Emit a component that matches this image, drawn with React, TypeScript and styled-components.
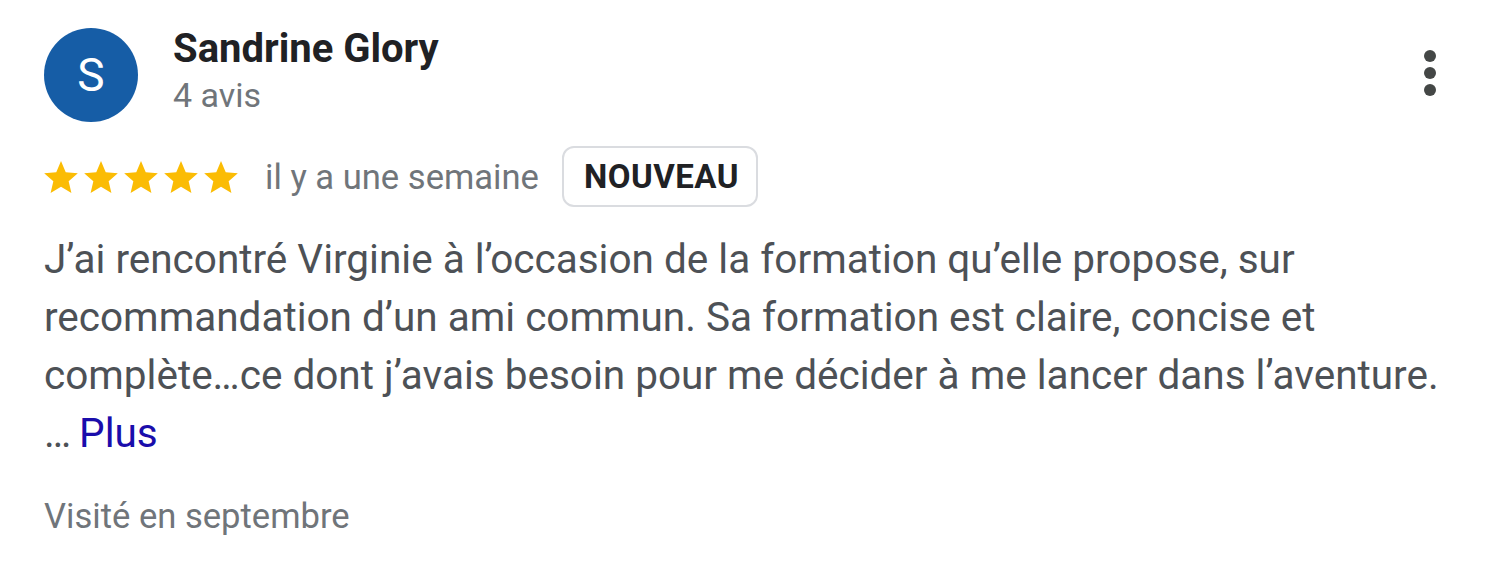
import styled, { createGlobalStyle } from 'styled-components';

const GlobalStyle = createGlobalStyle`
  html, body {
    margin: 0;
    padding: 0;
    background: #fff;
  }
  body {
    font-family: Roboto, 'Liberation Sans', Arial, sans-serif;
  }
`;

const Card = styled.div`
  width: 1500px;
  box-sizing: border-box;
  padding: 25px 30px 0 44px;
  display: flex;
  flex-direction: column;
`;

const Header = styled.div`
  display: flex;
  align-items: flex-start;
  justify-content: space-between;
`;

const Author = styled.div`
  display: flex;
  align-items: flex-start;
  gap: 35px;
`;

const Avatar = styled.div`
  width: 94px;
  height: 94px;
  margin-top: 3px;
  border-radius: 50%;
  background: #165da6;
  color: #fff;
  display: flex;
  align-items: center;
  justify-content: center;
  font-size: 46px;
  font-weight: 400;
`;

const AuthorText = styled.div`
  display: flex;
  flex-direction: column;
`;

const Name = styled.div`
  font-size: 40px;
  line-height: 48px;
  font-weight: 700;
  color: #202124;
`;

const Count = styled.div`
  font-size: 34px;
  line-height: 44px;
  color: #70757a;
`;

const MoreButton = styled.button`
  border: 0;
  background: none;
  padding: 0;
  margin: 24px 33px 0 0;
  display: flex;
`;

const MetaRow = styled.div`
  display: flex;
  align-items: center;
  margin-top: 24px;
  height: 61px;
`;

const Stars = styled.div`
  display: flex;
  gap: 6px;
  margin-right: 27px;
`;

const When = styled.span`
  font-size: 34.6px;
  color: #70757a;
`;

const Badge = styled.span`
  margin-left: 23px;
  height: 61px;
  box-sizing: border-box;
  padding: 0 17px 0 20px;
  border: 2px solid #dadce0;
  border-radius: 12px;
  display: flex;
  align-items: center;
  font-size: 33px;
  letter-spacing: 0.5px;
  font-weight: 700;
  color: #202124;
`;

const Body = styled.p`
  margin: 23px 0 0;
  font-size: 40.5px;
  line-height: 58px;
  color: #4d5156;
`;

const PlusLink = styled.a`
  color: #1a0dab;
  text-decoration: none;
  margin-left: 8px;
`;

const Visited = styled.div`
  margin-top: 32px;
  font-size: 34.6px;
  line-height: 44px;
  color: #70757a;
`;

function Star() {
  return (
    <svg width="34" height="32" viewBox="2 2 20 19">
      <path
        fill="#fbbc04"
        d="M12 17.27L18.18 21l-1.64-7.03L22 9.24l-7.19-.61L12 2 9.19 8.63 2 9.24l5.46 4.73L5.82 21z"
      />
    </svg>
  );
}

function App() {
  return (
    <>
      <GlobalStyle />
      <Card>
        <Header>
          <Author>
            <Avatar>S</Avatar>
            <AuthorText>
              <Name>Sandrine Glory</Name>
              <Count>4 avis</Count>
            </AuthorText>
          </Author>
          <MoreButton aria-label="Plus d'options">
            <svg width="14" height="48" viewBox="0 0 14 48">
              <circle cx="7" cy="7" r="6" fill="#444746" />
              <circle cx="7" cy="24" r="6" fill="#444746" />
              <circle cx="7" cy="41" r="6" fill="#444746" />
            </svg>
          </MoreButton>
        </Header>
        <MetaRow>
          <Stars>
            {[0, 1, 2, 3, 4].map((i) => (
              <Star key={i} />
            ))}
          </Stars>
          <When>il y a une semaine</When>
          <Badge>NOUVEAU</Badge>
        </MetaRow>
        <Body>
          J’ai rencontré Virginie à l’occasion de la formation qu’elle propose, sur
          <br />
          recommandation d’un ami commun. Sa formation est claire, concise et
          <br />
          complète…ce dont j’avais besoin pour me décider à me lancer dans l’aventure.
          <br />…<PlusLink href="#">Plus</PlusLink>
        </Body>
        <Visited>Visité en septembre</Visited>
      </Card>
    </>
  );
}

export default App;
